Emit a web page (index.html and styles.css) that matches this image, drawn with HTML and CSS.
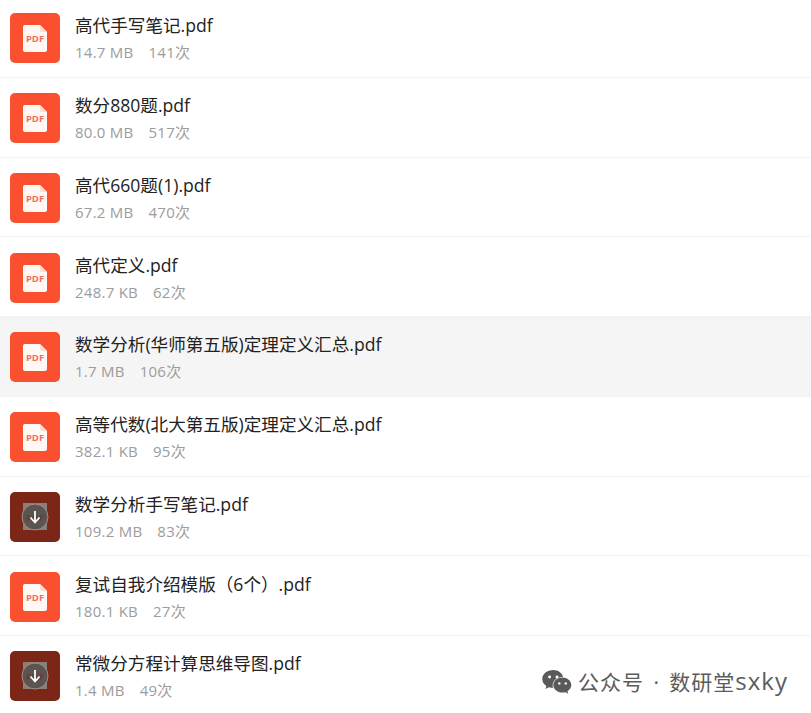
FILE: index.html
```html
<!DOCTYPE html>
<html lang="zh-CN">
<head>
<meta charset="utf-8">
<title>文件列表</title>
<link rel="stylesheet" href="styles.css">
</head>
<body>
<svg class="defs" width="0" height="0" aria-hidden="true">
  <symbol id="pdf" viewBox="0 0 50 50">
    <rect width="50" height="50" rx="5" fill="#fb5030"/>
    <path d="M13 14a2 2 0 0 1 2-2h15l7 7v18a2 2 0 0 1-2 2H15a2 2 0 0 1-2-2z" fill="#fff8f5"/>
    <path d="M30 12l7 7h-5a2 2 0 0 1-2-2z" fill="#fddcd2"/>
    <text x="25" y="28.500" text-anchor="middle" class="pdf-label">PDF</text>
  </symbol>
  <symbol id="dl" viewBox="0 0 50 50">
    <rect width="50" height="50" rx="5" fill="#7c2617"/>
    <rect x="13" y="11" width="24" height="27" fill="#8a8078"/>
    <circle cx="25" cy="25" r="13" fill="#5a5552" stroke="#a88c84" stroke-width="1"/>
    <text x="25" y="28.500" text-anchor="middle" class="dl-label">PDF</text>
    <path d="M25 19v11M20.500 25.500l4.500 5 4.500-5" fill="none" stroke="#fff" stroke-width="1.800"/>
  </symbol>
</svg>
<main class="list">
  <div class="row"><svg class="icon"><use href="#pdf"/></svg><div class="info"><div class="name">高代手写笔记.pdf</div><div class="meta"><span class="size">14.7 MB</span><span>141次</span></div></div></div>
  <div class="row"><svg class="icon"><use href="#pdf"/></svg><div class="info"><div class="name">数分880题.pdf</div><div class="meta"><span class="size">80.0 MB</span><span>517次</span></div></div></div>
  <div class="row"><svg class="icon"><use href="#pdf"/></svg><div class="info"><div class="name">高代660题(1).pdf</div><div class="meta"><span class="size">67.2 MB</span><span>470次</span></div></div></div>
  <div class="row"><svg class="icon"><use href="#pdf"/></svg><div class="info"><div class="name">高代定义.pdf</div><div class="meta"><span class="size">248.7 KB</span><span>62次</span></div></div></div>
  <div class="row hover"><svg class="icon"><use href="#pdf"/></svg><div class="info"><div class="name">数学分析(华师第五版)定理定义汇总.pdf</div><div class="meta"><span class="size">1.7 MB</span><span>106次</span></div></div></div>
  <div class="row"><svg class="icon"><use href="#pdf"/></svg><div class="info"><div class="name">高等代数(北大第五版)定理定义汇总.pdf</div><div class="meta"><span class="size">382.1 KB</span><span>95次</span></div></div></div>
  <div class="row"><svg class="icon"><use href="#dl"/></svg><div class="info"><div class="name">数学分析手写笔记.pdf</div><div class="meta"><span class="size">109.2 MB</span><span>83次</span></div></div></div>
  <div class="row"><svg class="icon"><use href="#pdf"/></svg><div class="info"><div class="name">复试自我介绍模版（6个）.pdf</div><div class="meta"><span class="size">180.1 KB</span><span>27次</span></div></div></div>
  <div class="row"><svg class="icon"><use href="#dl"/></svg><div class="info"><div class="name">常微分方程计算思维导图.pdf</div><div class="meta"><span class="size">1.4 MB</span><span>49次</span></div></div></div>
</main>
<div class="mark">
  <svg class="wx" viewBox="0 0 32 26" aria-hidden="true">
    <path d="M12 0C5.400 0 0 4.300 0 9.700c0 3.100 1.700 5.700 4.500 7.500L3.400 20.700l4-2.100c1.400.4 2.900.6 4.300.6-.3-.9-.4-1.800-.4-2.700 0-5 4.600-9 10.400-9h.9C21.400 3 17.100 0 12 0z" fill="#5a5a5a"/>
    <path d="M31.500 16.300c0-4.500-4.400-8.200-9.700-8.200s-9.800 3.700-9.800 8.200 4.400 8.200 9.800 8.200c1.100 0 2.200-.2 3.300-.5l3 1.700-.8-2.800c2.500-1.500 4.200-3.800 4.200-6.600z" fill="#5a5a5a"/>
    <circle cx="8" cy="7.500" r="1.600" fill="#fff"/><circle cx="16" cy="7.500" r="1.600" fill="#fff"/>
    <circle cx="18.500" cy="14.500" r="1.300" fill="#fff"/><circle cx="25.500" cy="14.500" r="1.300" fill="#fff"/>
  </svg>
  <span>公众号 · 数研堂<span class="latin">sxky</span></span>
</div>
</body>
</html>
```
FILE: styles.css
```css
* { box-sizing: border-box; }
html, body { margin: 0; height: 100%; overflow: hidden; background: #fff; }
body { position: relative; font-family: "Open Sans", "Noto Sans CJK SC", sans-serif; }
.defs { position: absolute; }
.list { margin-top: -2px; }
.row {
  height: 79.75px;
  display: flex;
  align-items: center;
  gap: 15px;
  padding-left: 10px;
  padding-top: 2px;
  border-bottom: 1px solid #f3f3f3;
}
.row.hover { background: #f5f5f5; }
.icon { width: 50px; height: 50px; flex: none; }
.pdf-label { font: 700 9.500px "Open Sans", sans-serif; fill: #f0705a; }
.dl-label { font: 700 9.500px "Open Sans", sans-serif; fill: #6b3a36; }
.info { display: flex; flex-direction: column; gap: 2px; margin-top: -1px; }
.name { font-size: 17.600px; line-height: 27px; color: #222; }
.meta { font-size: 15px; letter-spacing: 0.250px; line-height: 22px; color: #9c9c9c; display: flex; gap: 15px; }
.mark {
  position: absolute;
  right: 23px;
  top: 666px;
  display: flex;
  align-items: center;
  gap: 7px;
  font-size: 21px;
  letter-spacing: 1px;
  word-spacing: 3px;
  line-height: 30px;
  color: #5c5c5c;
}
.latin { font-size: 24px; }
.wx { width: 30px; height: 24px; margin-right: -1px; }
```
